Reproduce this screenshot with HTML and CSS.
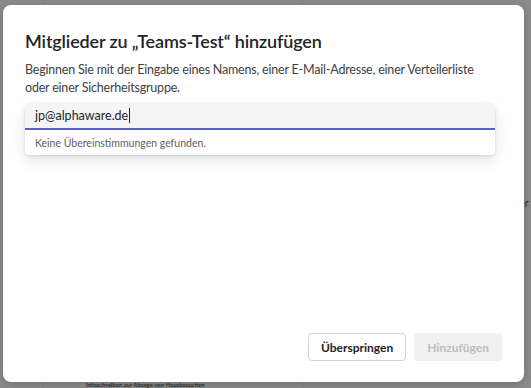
FILE: index.html
```html
<!DOCTYPE html>
<html lang="de">
<head>
  <meta charset="UTF-8">
  <meta name="viewport" content="width=device-width, initial-scale=1.0">
  <title>Mitglieder hinzufügen</title>
  <link rel="stylesheet" href="styles.css">
</head>
<body>
  <div class="backdrop">
    <span class="bg-line bg-line-a"></span>
    <span class="bg-line bg-line-b"></span>
    <span class="bg-text bg-text-right">er</span>
    <span class="bg-text bg-text-bottom">Infoschreiben zur Absage von Hausbesuchen</span>
  </div>

  <div class="dialog">
    <h1 class="dialog-title">Mitglieder zu „Teams-Test“ hinzufügen</h1>
    <p class="dialog-text">Beginnen Sie mit der Eingabe eines Namens, einer E-Mail-Adresse, einer Verteilerliste oder einer Sicherheitsgruppe.</p>

    <div class="picker">
      <div class="picker-input">
        <span class="picker-value">jp@alphaware.de</span><span class="caret"></span>
      </div>
      <div class="picker-menu">Keine Übereinstimmungen gefunden.</div>
    </div>

    <div class="dialog-footer">
      <button type="button" class="btn btn-secondary">Überspringen</button>
      <button type="button" class="btn btn-primary" disabled>Hinzufügen</button>
    </div>
  </div>
</body>
</html>
```

FILE: styles.css
```css
* {
  margin: 0;
  padding: 0;
  box-sizing: border-box;
  font-family: 'Lato', 'Noto Sans', sans-serif;
}
body {
  width: 531px;
  height: 388px;
  overflow: hidden;
  background: #8b8b8b;
  position: relative;
  padding: 5px 7px 6px 3px;
}
.backdrop {
  position: absolute;
  inset: 0;
}
.bg-line {
  position: absolute;
  top: 0;
  bottom: 0;
  width: 1px;
  background: #838383;
}
.bg-line-a { left: 43px; }
.bg-line-b { left: 302px; }
.bg-text {
  position: absolute;
  color: #2e2e2e;
}
.bg-text-right {
  left: 519px;
  top: 196px;
  font-size: 11px;
}
.bg-text-bottom {
  left: 86px;
  top: 382px;
  font-size: 6px;
  line-height: 6px;
  font-weight: 700;
}
.dialog {
  position: relative;
  height: 100%;
  background: #ffffff;
  border-radius: 8px;
  padding: 24px 22px 21px 22px;
  display: flex;
  flex-direction: column;
  box-shadow: 0 2px 8px rgba(0, 0, 0, 0.2);
}
.dialog-title {
  font-size: 18px;
  font-weight: 600;
  letter-spacing: -0.15px;
  color: #242424;
  line-height: 24px;
  margin-bottom: 8px;
}
.dialog-text {
  max-width: 455px;
  font-size: 12.5px;
  letter-spacing: -0.2px;
  color: #424242;
  line-height: 18px;
  margin-bottom: 6px;
}
.picker {
  width: 470px;
  border-radius: 4px;
  box-shadow: 0 6px 14px rgba(0, 0, 0, 0.1), 0 1px 3px rgba(0, 0, 0, 0.12);
}
.picker-input {
  height: 27px;
  background: #f5f5f5;
  border-radius: 4px 4px 0 0;
  border-bottom: 2px solid #5b5fc7;
  padding: 0 10px;
  display: flex;
  align-items: center;
}
.picker-value {
  font-size: 12.5px;
  color: #242424;
}
.caret {
  width: 1px;
  height: 15px;
  background: #242424;
  margin-left: 1px;
}
.picker-menu {
  height: 25px;
  background: #ffffff;
  border-radius: 0 0 4px 4px;
  padding: 0 10px;
  font-size: 10.5px;
  color: #616161;
  display: flex;
  align-items: center;
}
.dialog-footer {
  margin-top: auto;
  display: flex;
  justify-content: flex-end;
  gap: 8px;
}
.btn {
  height: 28px;
  padding: 0 12px;
  border-radius: 4px;
  font-size: 12px;
  font-weight: 700;
  cursor: pointer;
}
.btn-secondary {
  background: #ffffff;
  border: 1px solid #d1d1d1;
  color: #242424;
}
.btn-primary {
  background: #f0f0f0;
  border: 1px solid #f0f0f0;
  color: #bdbdbd;
  cursor: default;
}
```
